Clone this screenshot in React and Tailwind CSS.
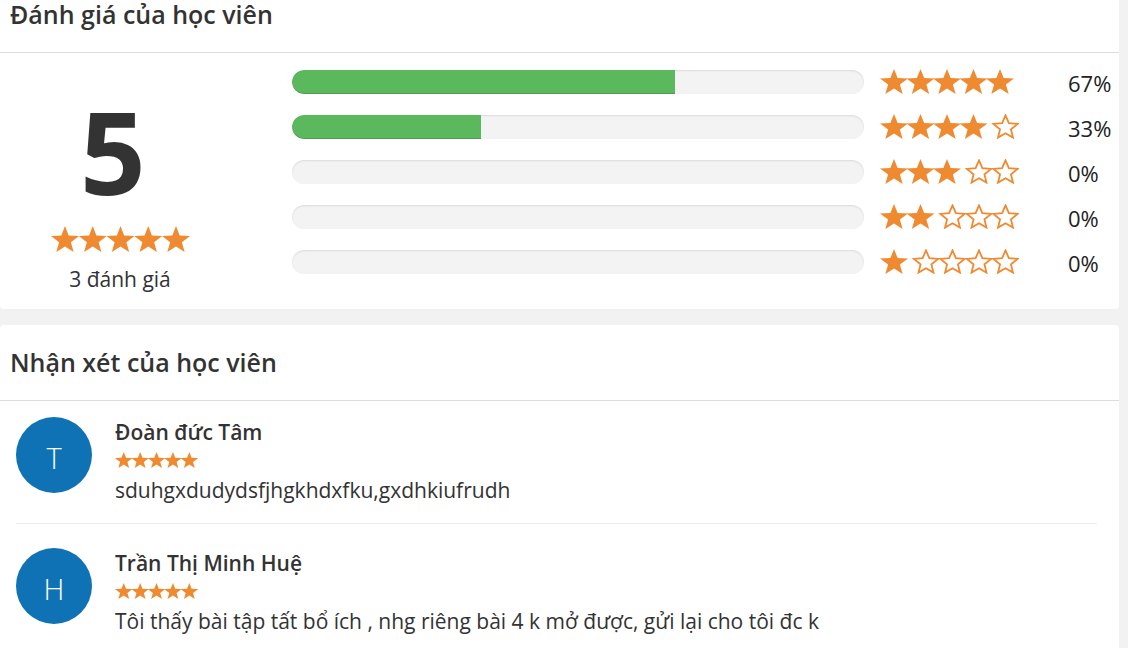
const ORANGE = '#ef8a30'

function starPoints(x, y, w, h, ratio = 0.42) {
  const sx = w / 1.902
  const sy = h / 1.809
  const cx = x + w / 2
  const cy = y + sy
  const pts = []
  for (let i = 0; i < 10; i++) {
    const a = ((-90 + 36 * i) * Math.PI) / 180
    const r = i % 2 === 0 ? 1 : ratio
    pts.push(`${(cx + Math.cos(a) * r * sx).toFixed(2)},${(cy + Math.sin(a) * r * sy).toFixed(2)}`)
  }
  return pts.join(' ')
}

function Stars({ filled = 5, pitch, fw, fh, ew = fw, eh = fh, eoff = 0, stroke = 1.8 }) {
  const width = 4 * pitch + Math.max(fw, ew + eoff)
  return (
    <svg width={width} height={fh} viewBox={`0 0 ${width} ${fh}`} className="block shrink-0">
      {Array.from({ length: 5 }).map((_, i) =>
        i < filled ? (
          <polygon key={i} points={starPoints(i * pitch, 0, fw, fh)} fill={ORANGE} />
        ) : (
          <polygon
            key={i}
            points={starPoints(i * pitch + eoff + stroke / 2, (fh - eh) / 2 + stroke / 2, ew - stroke, eh - stroke, 0.45)}
            fill="#fff"
            stroke={ORANGE}
            strokeWidth={stroke}
            strokeLinejoin="miter"
          />
        )
      )}
    </svg>
  )
}

const rows = [
  { stars: 5, pct: 67 },
  { stars: 4, pct: 33 },
  { stars: 3, pct: 0 },
  { stars: 2, pct: 0 },
  { stars: 1, pct: 0 },
]

const reviews = [
  { initial: 'T', name: 'Đoàn đức Tâm', text: 'sduhgxdudydsfjhgkhdxfku,gxdhkiufrudh' },
  { initial: 'H', name: 'Trần Thị Minh Huệ', text: 'Tôi thấy bài tập tất bổ ích , nhg riêng bài 4 k mở được, gửi lại cho tôi đc k' },
]

function CardHeader({ children }) {
  return (
    <div className="flex h-[76px] items-center border-b border-[#dcdcdc] px-[10px]">
      <h2 className="text-[25px] font-semibold text-[#333]">{children}</h2>
    </div>
  )
}

export default function App() {
  return (
    <div
      className="flex h-screen flex-col overflow-hidden bg-[#f2f2f2] pr-[9px]"
      style={{ fontFamily: '"Open Sans", "Noto Sans", sans-serif' }}
    >
      <section className="-mt-[23px] w-[1119px] shrink-0 rounded-[4px] bg-white">
        <CardHeader>Đánh giá của học viên</CardHeader>
        <div className="flex items-start">
          <div className="flex w-[240px] shrink-0 flex-col items-center pt-[40px]">
            <div className="mr-[14px] text-[115px] font-bold leading-none text-[#333]">5</div>
            <div className="mt-[18px]">
              <Stars pitch={27.75} fw={28} fh={26} />
            </div>
            <div className="mt-[13px] text-[21px] leading-[28px] text-[#333]">3 đánh giá</div>
          </div>
          <div className="ml-[52px] flex flex-col pb-[25px] pt-[6px]">
            {rows.map((r) => (
              <div key={r.stars} className="flex h-[45px] items-center">
                <div className="h-[24px] w-[572px] overflow-hidden rounded-full bg-[#f3f3f3] shadow-[inset_0_1px_2px_rgba(0,0,0,0.1)]">
                  <div
                    className="h-full rounded-l-full bg-[#5cb85c] shadow-[inset_0_-1px_0_rgba(0,0,0,0.15)]"
                    style={{ width: `${r.pct}%` }}
                  />
                </div>
                <div className="ml-[16px] w-[140px]">
                  <Stars filled={r.stars} pitch={26.5} fw={28} fh={25} ew={26} eh={24} eoff={6.5} />
                </div>
                <div className="ml-[48px] pt-[3px] text-[22px] text-[#222]">{r.pct}%</div>
              </div>
            ))}
          </div>
        </div>
      </section>

      <section className="mt-[16px] w-[1119px] shrink-0 rounded-[4px] bg-white">
        <CardHeader>Nhận xét của học viên</CardHeader>
        <div className="pl-[16px] pr-[22px]">
          {reviews.map((rv, i) => (
            <div
              key={rv.name}
              className={`flex border-b border-[#eeeeee] pb-[19px] ${i === 0 ? 'pt-[16px]' : 'pt-[24px]'}`}
            >
              <div className="flex h-[76px] w-[76px] shrink-0 items-center justify-center rounded-full bg-[#0e72b4] pt-[6px] text-[29px] font-light text-white">
                {rv.initial}
              </div>
              <div className="ml-[23px] pt-[1px]">
                <div className="text-[21px] font-semibold leading-[28px] text-[#333]">{rv.name}</div>
                <div className="mt-[6px]">
                  <Stars pitch={16.4} fw={17.5} fh={16} />
                </div>
                <div className="mt-[8px] text-[21px] leading-[28px] text-[#333]">{rv.text}</div>
              </div>
            </div>
          ))}
        </div>
      </section>
    </div>
  )
}
